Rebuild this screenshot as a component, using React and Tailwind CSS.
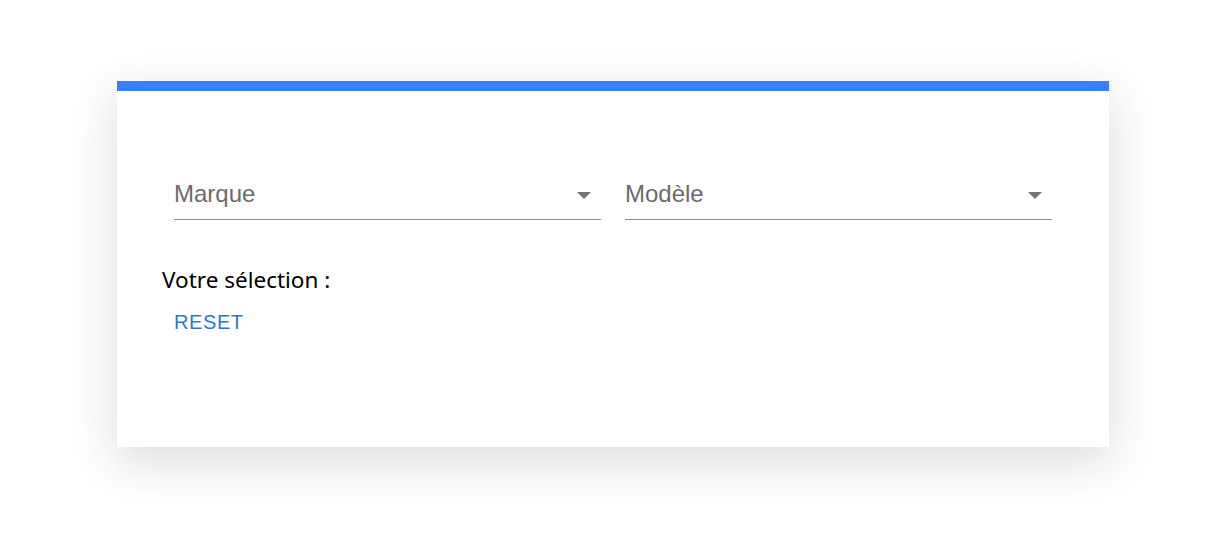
import { useState } from 'react';

function SelectField({ label }) {
  return (
    <div className="m-[12px] flex-1">
      <div className="flex items-center justify-between border-b border-[#8c8c8c] pb-[11px]">
        <span className="text-[24px] leading-[28px] text-[#6b6b6b]" style={{ fontFamily: '"Liberation Sans", Arial, sans-serif' }}>
          {label}
        </span>
        <svg width="14" height="7" viewBox="0 0 14 7" className="mr-[10px] mt-[3px]">
          <path d="M0 0h14L7 7z" fill="#757575" />
        </svg>
      </div>
    </div>
  );
}

export default function App() {
  const [brand, setBrand] = useState('');

  return (
    <div className="min-h-[544px] bg-white pt-[81px]">
      <div className="ml-[117px] h-[366px] w-[992px] bg-white shadow-[0_14px_44px_rgba(30,40,60,0.17)]">
        <div className="h-[10px] bg-[#387fff]" />
        <div className="px-[45px] pt-[77px]">
          <div className="flex">
            <SelectField label="Marque" />
            <SelectField label="Modèle" />
          </div>
          <p className="mt-[34px] text-[22.5px] leading-[28px] text-black" style={{ fontFamily: '"Noto Sans", "Open Sans", sans-serif' }}>
            Votre sélection : {brand}
          </p>
          <button
            type="button"
            onClick={() => setBrand('')}
            className="ml-[12px] mt-[16px] block text-[20px] leading-[24px] tracking-[0.6px] text-[#2a78d6]"
            style={{ fontFamily: '"Liberation Sans", Arial, sans-serif' }}
          >
            RESET
          </button>
        </div>
      </div>
    </div>
  );
}
